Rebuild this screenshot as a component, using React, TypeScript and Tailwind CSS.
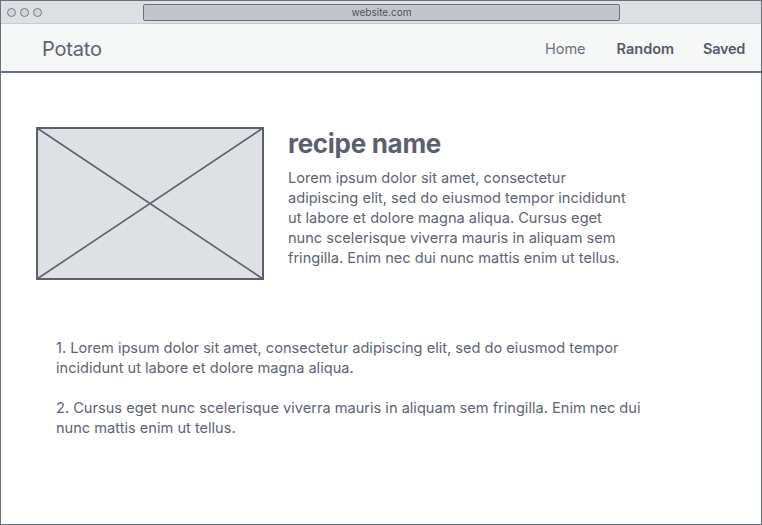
export default function App() {
  return (
    <div className="w-[762px] h-[525px] bg-white border border-[#6b7080] flex flex-col overflow-hidden font-['Inter',sans-serif] text-[#5b6070]">
      {/* window chrome */}
      <div className="h-[23px] bg-[#dedfe3] border-b border-[#c9cbd1] flex items-center px-[6px] relative">
        <div className="flex gap-[4px]">
          <span className="w-[9px] h-[9px] rounded-full border border-[#767b89] bg-[#d2d4d9]" />
          <span className="w-[9px] h-[9px] rounded-full border border-[#767b89] bg-[#d2d4d9]" />
          <span className="w-[9px] h-[9px] rounded-full border border-[#767b89] bg-[#d2d4d9]" />
        </div>
        <div className="absolute left-[142px] top-[3px] w-[477px] h-[17px] bg-[#c3c5cb] border border-[#6b7080] rounded-[2px] flex items-center justify-center text-[10px] text-[#4c5160]">
          website.com
        </div>
      </div>

      {/* nav */}
      <div className="h-[49px] bg-[#f6f7f7] border-b-2 border-[#6b7080] flex items-center pt-[2px] pl-[41px] pr-[16px]">
        <div className="text-[20px] text-[#5e6373] tracking-[-0.2px]">Potato</div>
        <div className="ml-auto flex items-center gap-[29px] text-[14.5px]">
          <span className="text-[#6b7080] mr-[2px]">Home</span>
          <span className="font-semibold text-[#555a69]">Random</span>
          <span className="font-semibold text-[#555a69] tracking-[-0.3px]">Saved</span>
        </div>
      </div>

      {/* recipe header */}
      <div className="flex pl-[35px] pt-[54px]">
        <svg width="228" height="153" viewBox="0 0 228 153" className="shrink-0">
          <rect x="1" y="1" width="226" height="151" fill="#dfe0e4" stroke="#5b6070" strokeWidth="2" />
          <line x1="1" y1="1" x2="227" y2="152" stroke="#5b6070" strokeWidth="1.6" />
          <line x1="227" y1="1" x2="1" y2="152" stroke="#5b6070" strokeWidth="1.6" />
        </svg>
        <div className="ml-[24px] w-[346px]">
          <h1 className="text-[26px] font-bold leading-[32px] tracking-[-0.3px] mt-[1px] text-[#5b6070]">recipe name</h1>
          <p className="text-[14.6px] leading-[20px] mt-[8px] text-[#5e6373]">
            Lorem ipsum dolor sit amet, consectetur adipiscing elit, sed do eiusmod tempor incididunt ut labore et dolore magna aliqua. Cursus eget nunc scelerisque viverra mauris in aliquam sem fringilla. Enim nec dui nunc mattis enim ut tellus.
          </p>
        </div>
      </div>

      {/* steps */}
      <div className="pl-[55px] pt-[58px] w-[640px] flex flex-col gap-[20px] text-[14.6px] leading-[20px] text-[#5e6373]">
        <p>1. Lorem ipsum dolor sit amet, consectetur adipiscing elit, sed do eiusmod tempor incididunt ut labore et dolore magna aliqua.</p>
        <p>2. Cursus eget nunc scelerisque viverra mauris in aliquam sem fringilla. Enim nec dui nunc mattis enim ut tellus.</p>
      </div>
    </div>
  );
}
